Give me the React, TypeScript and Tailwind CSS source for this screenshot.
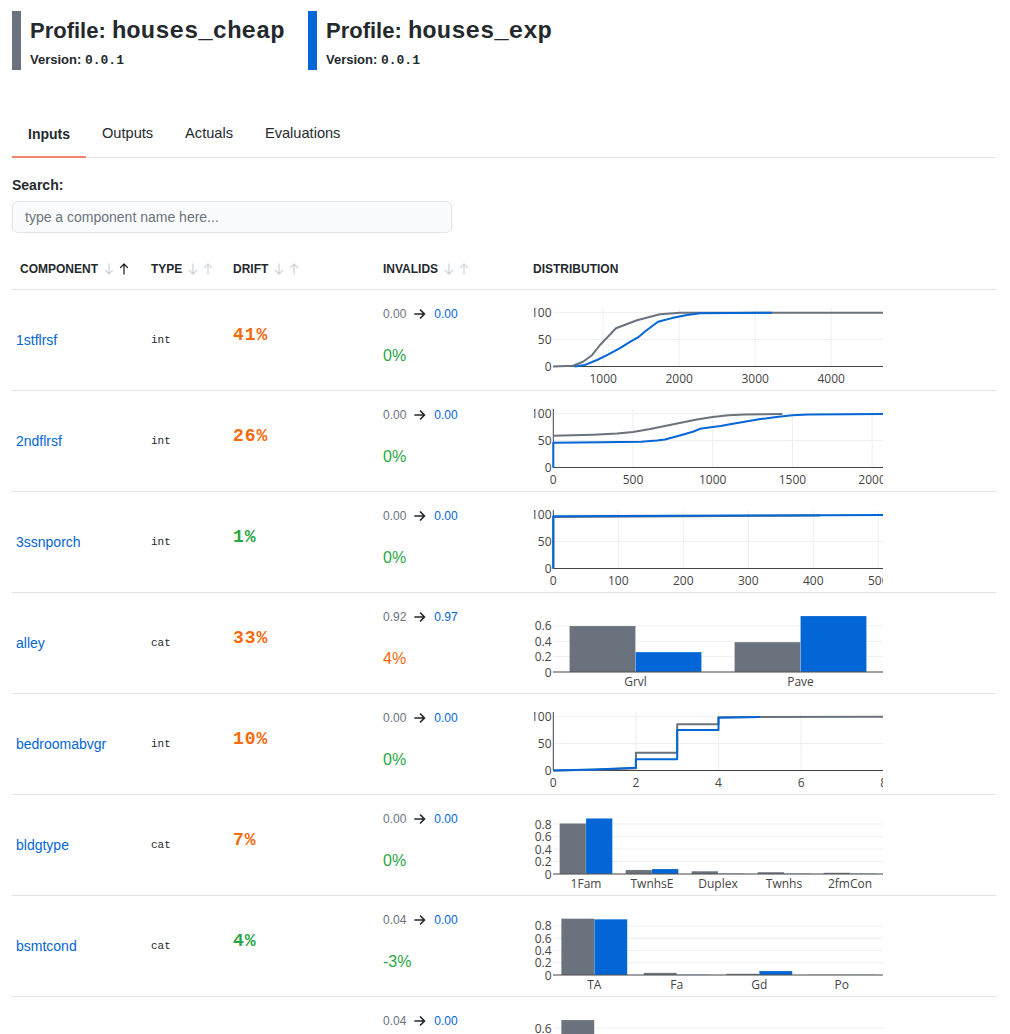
import React from "react";

const GRAY = "#6a737d";
const BLUE = "#0366d6";
const ORANGE = "#f66a0a";
const GREEN = "#28a745";
const AXIS_FONT = "'Open Sans', Verdana, Arial, sans-serif";

type Pt = [number, number];

function ChartSvg({ children }: { children: React.ReactNode }) {
  return (
    <svg width={349} height={100} viewBox="3 0 349 100" className="block">
      {children}
    </svg>
  );
}

function LineChart({
  x0,
  v0,
  k,
  xTicks,
  gray,
  blue,
  zeroX,
}: {
  x0: number;
  v0: number;
  k: number;
  xTicks: number[];
  gray: Pt[];
  blue: Pt[];
  zeroX?: boolean;
}) {
  const X = (v: number) => x0 + (v - v0) * k;
  const Y = (p: number) => 76.5 - p * 0.538;
  const pts = (a: Pt[]) => a.map(([v, p]) => `${X(v).toFixed(1)},${Y(p).toFixed(1)}`).join(" ");
  return (
    <ChartSvg>
      {[50, 100].map((p) => (
        <line key={p} x1={22} x2={352} y1={Y(p)} y2={Y(p)} stroke="#eee" strokeWidth={1} />
      ))}
      {xTicks
        .filter((v) => v !== 0)
        .map((v) => (
          <line key={v} x1={X(v)} x2={X(v)} y1={18} y2={76.5} stroke="#eee" strokeWidth={1} />
        ))}
      <line x1={22} x2={352} y1={76.5} y2={76.5} stroke="#444" strokeWidth={1} />
      {zeroX && <line x1={X(0)} x2={X(0)} y1={18} y2={76.5} stroke="#444" strokeWidth={1} />}
      <polyline points={pts(gray)} fill="none" stroke={GRAY} strokeWidth={2} strokeLinejoin="round" />
      <polyline points={pts(blue)} fill="none" stroke={BLUE} strokeWidth={2} strokeLinejoin="round" />
      {[0, 50, 100].map((p) => (
        <text key={p} x={20.5} y={Y(p) + 4.5} textAnchor="end" fontFamily={AXIS_FONT} fontSize={12} fill="#444">
          {p}
        </text>
      ))}
      {xTicks.map((v) => (
        <text key={v} x={X(v)} y={92.5} textAnchor="middle" fontFamily={AXIS_FONT} fontSize={12} fill="#444">
          {v}
        </text>
      ))}
    </ChartSvg>
  );
}

function BarChart({
  cats,
  gray,
  blue,
  scale,
  ticks,
}: {
  cats: string[];
  gray: number[];
  blue: number[];
  scale: number;
  ticks: number[];
}) {
  const y0 = 79;
  const catW = 330 / cats.length;
  const bw = catW * 0.4;
  return (
    <ChartSvg>
      {ticks
        .filter((t) => t !== 0)
        .map((t) => (
          <line key={t} x1={22} x2={352} y1={y0 - t * scale} y2={y0 - t * scale} stroke="#eee" strokeWidth={1} />
        ))}
      {cats.map((c, i) => {
        const cx = 22 + catW * i + catW / 2;
        const hg = gray[i] * scale;
        const hb = blue[i] * scale;
        return (
          <g key={c}>
            <rect x={cx - bw} y={y0 - hg} width={bw} height={hg} fill={GRAY} stroke="rgba(255,255,255,0.35)" strokeWidth={0.5} />
            <rect x={cx} y={y0 - hb} width={bw} height={hb} fill={BLUE} stroke="rgba(255,255,255,0.35)" strokeWidth={0.5} />
            <text x={cx} y={92.5} textAnchor="middle" fontFamily={AXIS_FONT} fontSize={12} fill="#444">
              {c}
            </text>
          </g>
        );
      })}
      <line x1={22} x2={352} y1={y0} y2={y0} stroke="#444" strokeWidth={1} />
      {ticks.map((t) => (
        <text key={t} x={20.5} y={y0 - t * scale + 4.5} textAnchor="end" fontFamily={AXIS_FONT} fontSize={12} fill="#444">
          {t === 0 ? "0" : t.toFixed(1)}
        </text>
      ))}
    </ChartSvg>
  );
}

function SortArrow({ dir, dark }: { dir: "up" | "down"; dark?: boolean }) {
  return (
    <svg width={10} height={12} viewBox="0 0 10 12" className="block">
      {dir === "down" ? (
        <path d="M5 1V11M1.5 7.5L5 11L8.5 7.5" fill="none" stroke={dark ? "#24292e" : "#d1d5da"} strokeWidth={1.3} strokeLinecap="round" strokeLinejoin="round" />
      ) : (
        <path d="M5 11V1M1.5 4.5L5 1L8.5 4.5" fill="none" stroke={dark ? "#24292e" : "#d1d5da"} strokeWidth={1.3} strokeLinecap="round" strokeLinejoin="round" />
      )}
    </svg>
  );
}

function RightArrow() {
  return (
    <svg width={12} height={12} viewBox="0 0 12 12" className="block">
      <path d="M1 6H10.5M6.5 2L10.5 6L6.5 10" fill="none" stroke="#24292e" strokeWidth={1.7} strokeLinecap="round" strokeLinejoin="round" />
    </svg>
  );
}

type Row = {
  name: string;
  type: string;
  drift: string;
  driftColor: string;
  inv: [string, string];
  invPct: string;
  invColor: string;
  chart: React.ReactNode;
};

const rows: Row[] = [
  {
    name: "1stflrsf",
    type: "int",
    drift: "41%",
    driftColor: ORANGE,
    inv: ["0.00", "0.00"],
    invPct: "0%",
    invColor: GREEN,
    chart: (
      <LineChart
        x0={22}
        v0={340}
        k={0.076}
        xTicks={[1000, 2000, 3000, 4000]}
        gray={[[340, 0], [603, 1.5], [735, 9], [853, 21], [958, 40], [1169, 71], [1445, 86], [1748, 97], [2011, 100], [6700, 100]]}
        blue={[[629, 0], [761, 3], [919, 12], [1050, 21], [1222, 34], [1353, 46], [1458, 54], [1550, 65], [1722, 83], [1906, 90], [2103, 96], [2274, 99], [3222, 100]]}
      />
    ),
  },
  {
    name: "2ndflrsf",
    type: "int",
    drift: "26%",
    driftColor: ORANGE,
    inv: ["0.00", "0.00"],
    invPct: "0%",
    invColor: GREEN,
    chart: (
      <LineChart
        x0={22.3}
        v0={0}
        k={0.1594}
        zeroX
        xTicks={[0, 500, 1000, 1500, 2000]}
        gray={[[0, 59], [250, 61], [400, 63], [500, 66], [600, 71], [700, 77], [800, 83], [900, 89], [1000, 94], [1100, 97], [1200, 98.5], [1437, 99.5]]}
        blue={[[0, 0], [0, 46], [300, 47], [550, 48], [650, 50], [700, 52], [800, 60], [880, 67], [920, 72], [1000, 75], [1050, 77], [1100, 80], [1200, 85], [1300, 90], [1400, 94], [1500, 97], [1600, 98.5], [2200, 99.5]]}
      />
    ),
  },
  {
    name: "3ssnporch",
    type: "int",
    drift: "1%",
    driftColor: GREEN,
    inv: ["0.00", "0.00"],
    invPct: "0%",
    invColor: GREEN,
    chart: (
      <LineChart
        x0={22.3}
        v0={0}
        k={0.65}
        zeroX
        xTicks={[0, 100, 200, 300, 400, 500]}
        gray={[[0, 0], [0, 95.5], [200, 97], [410, 98.5]]}
        blue={[[0, 0], [0, 97], [100, 97.6], [300, 98.6], [520, 99.5]]}
      />
    ),
  },
  {
    name: "alley",
    type: "cat",
    drift: "33%",
    driftColor: ORANGE,
    inv: ["0.92", "0.97"],
    invPct: "4%",
    invColor: ORANGE,
    chart: <BarChart cats={["Grvl", "Pave"]} gray={[0.6, 0.39]} blue={[0.26, 0.73]} scale={76.7} ticks={[0, 0.2, 0.4, 0.6]} />,
  },
  {
    name: "bedroomabvgr",
    type: "int",
    drift: "10%",
    driftColor: ORANGE,
    inv: ["0.00", "0.00"],
    invPct: "0%",
    invColor: GREEN,
    chart: (
      <LineChart
        x0={22.3}
        v0={0}
        k={41.3}
        zeroX
        xTicks={[0, 2, 4, 6, 8]}
        gray={[[0, 0], [1, 1.5], [2, 4], [2, 33], [3, 33], [3, 86], [4, 86], [4, 99], [5, 99.7], [9, 100]]}
        blue={[[0, 0], [1, 2], [2, 5], [2, 21], [3, 21], [3, 75], [4, 75], [4, 98], [5, 99.5]]}
      />
    ),
  },
  {
    name: "bldgtype",
    type: "cat",
    drift: "7%",
    driftColor: ORANGE,
    inv: ["0.00", "0.00"],
    invPct: "0%",
    invColor: GREEN,
    chart: (
      <BarChart
        cats={["1Fam", "TwnhsE", "Duplex", "Twnhs", "2fmCon"]}
        gray={[0.81, 0.065, 0.045, 0.03, 0.02]}
        blue={[0.89, 0.08, 0.006, 0.006, 0.006]}
        scale={62.5}
        ticks={[0, 0.2, 0.4, 0.6, 0.8]}
      />
    ),
  },
  {
    name: "bsmtcond",
    type: "cat",
    drift: "4%",
    driftColor: GREEN,
    inv: ["0.04", "0.00"],
    invPct: "-3%",
    invColor: GREEN,
    chart: (
      <BarChart
        cats={["TA", "Fa", "Gd", "Po"]}
        gray={[0.92, 0.035, 0.02, 0.004]}
        blue={[0.91, 0.006, 0.065, 0.003]}
        scale={61.3}
        ticks={[0, 0.2, 0.4, 0.6, 0.8]}
      />
    ),
  },
  {
    name: "bsmtexposure",
    type: "cat",
    drift: "12%",
    driftColor: ORANGE,
    inv: ["0.04", "0.00"],
    invPct: "-3%",
    invColor: GREEN,
    chart: (
      <BarChart
        cats={["No", "Av", "Gd", "Mn"]}
        gray={[0.7, 0.13, 0.07, 0.07]}
        blue={[0.48, 0.2, 0.22, 0.1]}
        scale={80}
        ticks={[0, 0.2, 0.4, 0.6]}
      />
    ),
  },
];

function ProfileHeader({ color, name, width }: { color: string; name: string; width: string }) {
  return (
    <div className={`flex gap-[9px] ${width}`}>
      <div className={`w-[9px] h-[59px] shrink-0 ${color}`} />
      <div className="flex flex-col">
        <div className="mt-[6px] text-[22px] font-bold leading-[28px] text-[#24292e] whitespace-nowrap">
          Profile:{" "}
          <span className="font-['Liberation_Mono',monospace] text-[24px] leading-[28px]">{name}</span>
        </div>
        <div className="mt-[5px] text-[13px] font-bold leading-[18px] text-[#24292e] whitespace-nowrap">
          Version: <span className="font-['Liberation_Mono',monospace] text-[13px]">0.0.1</span>
        </div>
      </div>
    </div>
  );
}

function HeaderCell({ label, dark, arrows = true }: { label: string; dark?: boolean; arrows?: boolean }) {
  return (
    <div className="flex items-center pl-2 h-10">
      <span className="text-xs font-bold uppercase text-[#24292e]">{label}</span>
      {arrows && (
        <span className="flex items-center gap-[5px] ml-[6px]">
          <SortArrow dir="down" />
          <SortArrow dir="up" dark={dark} />
        </span>
      )}
    </div>
  );
}

export default function App() {
  return (
    <div className="w-[1010px] bg-white pl-3 pr-[14px] font-['Liberation_Sans',Arial,sans-serif] text-[#24292e]">
      <div className="flex pt-[11px]">
        <ProfileHeader color="bg-[#6a737d]" name="houses_cheap" width="w-[296px]" />
        <ProfileHeader color="bg-[#0366d6]" name="houses_exp" width="w-[300px]" />
      </div>

      <div className="mt-[41px] flex border-b border-[#e1e4e8]">
        {["Inputs", "Outputs", "Actuals", "Evaluations"].map((t, i) => (
          <div
            key={t}
            className={
              i === 0
                ? "-mb-px flex h-[47px] items-center border-b-2 border-[#f9826c] px-4 text-sm font-bold text-[#24292e]"
                : "-mb-px flex h-[47px] items-center border-b-2 border-transparent px-4 text-[14.6px] text-[#24292e]"
            }
          >
            {t}
          </div>
        ))}
      </div>

      <div className="mt-[19px] text-sm font-bold leading-4">Search:</div>
      <div className="mt-2 flex h-8 w-[440px] items-center rounded-md border border-[#e1e4e8] bg-[#fafbfc] px-3 text-sm text-[#6a737d]">
        type a component name here...
      </div>

      <div className="mt-4">
        <div className="grid grid-cols-[131px_82px_150px_150px_1fr] border-b border-[#e1e4e8]">
          <HeaderCell label="Component" dark />
          <HeaderCell label="Type" />
          <HeaderCell label="Drift" />
          <HeaderCell label="Invalids" />
          <HeaderCell label="Distribution" arrows={false} />
        </div>
        {rows.map((r) => (
          <div key={r.name} className="grid h-[101px] grid-cols-[131px_82px_150px_150px_1fr] border-b border-[#e1e4e8]">
            <div className="flex items-center pl-1 text-sm text-[#0366d6]">{r.name}</div>
            <div className="flex items-center pl-2 font-['Liberation_Mono',monospace] text-[11px] text-[#24292e]">{r.type}</div>
            <div className="flex items-center pb-[10px] pl-2">
              <span className="font-['Liberation_Mono',monospace] text-[18px] font-bold tracking-[1px]" style={{ color: r.driftColor }}>
                {r.drift}
              </span>
            </div>
            <div className="flex flex-col pl-2 pt-4">
              <div className="flex h-4 items-center text-xs">
                <span className="text-[#6a737d]">{r.inv[0]}</span>
                <span className="mx-2">
                  <RightArrow />
                </span>
                <span className="text-[#0366d6]">{r.inv[1]}</span>
              </div>
              <div className="mt-[22px] text-base leading-6" style={{ color: r.invColor }}>
                {r.invPct}
              </div>
            </div>
            <div className="pl-[9px]">{r.chart}</div>
          </div>
        ))}
      </div>
    </div>
  );
}
